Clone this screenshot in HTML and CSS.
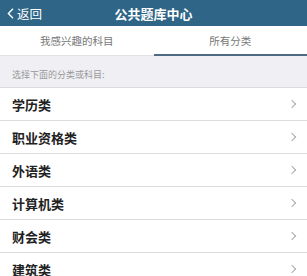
FILE: index.html
```html
<!DOCTYPE html>
<html>
  <head>
    <title>公共题库中心</title>
    <link rel="stylesheet" href="styles.css">
  </head>
  <body>
    <div class="navbar">
      <a class="back" href="#">
        <svg width="7" height="11" viewBox="0 0 7 11"><path d="M6 0.8 L1.4 5.5 L6 10.2" fill="none" stroke="#fff" stroke-width="1.4"/></svg>
        <span>返回</span>
      </a>
      <h1 class="title">公共题库中心</h1>
      <div></div>
    </div>
    <div class="tabs">
      <div class="tab">我感兴趣的科目</div>
      <div class="tab active">所有分类</div>
    </div>
    <div class="section-label">选择下面的分类或科目:</div>
    <ul class="list">
      <li>学历类</li>
      <li>职业资格类</li>
      <li>外语类</li>
      <li>计算机类</li>
      <li>财会类</li>
      <li>建筑类</li>
    </ul>
  </body>
</html>
```

FILE: styles.css
```css
body {
  margin: 0;
  font-family: "Noto Sans CJK SC", "Liberation Sans", sans-serif;
  background-color: #fff;
}
.navbar {
  height: 26px;
  background-color: #2f6586;
  display: grid;
  grid-template-columns: 1fr auto 1fr;
  align-items: center;
  color: #fff;
}
.back {
  display: flex;
  align-items: center;
  gap: 3px;
  padding-left: 7px;
  color: #fff;
  text-decoration: none;
  font-size: 12.5px;
}
.title {
  margin: 0;
  font-size: 13px;
  font-weight: bold;
}
.tabs {
  display: flex;
  height: 30px;
  border-bottom: 1px solid #e2e2e6;
  box-sizing: border-box;
}
.tab {
  flex: 1;
  display: flex;
  align-items: center;
  justify-content: center;
  font-size: 10.5px;
  color: #777;
  border-bottom: 2px solid transparent;
  margin-bottom: -1px;
}
.tab.active {
  border-bottom-color: #4d6b82;
}
.section-label {
  height: 31px;
  box-sizing: border-box;
  padding: 13px 12px 0;
  line-height: 12px;
  font-size: 9px;
  color: #999;
  background-color: #efeff4;
}
.list {
  list-style: none;
  margin: 0;
  padding: 0;
}
.list li {
  height: 32px;
  border-top: 1px solid #dcdce0;
  display: flex;
  align-items: center;
  justify-content: space-between;
  padding: 0 10px 0 12px;
  font-size: 13px;
  font-weight: bold;
  color: #222;
}
.list li::after {
  content: "";
  width: 5px;
  height: 5px;
  border-top: 1.2px solid #aaa;
  border-right: 1.2px solid #aaa;
  transform: rotate(45deg);
  margin-right: 2px;
}
```
